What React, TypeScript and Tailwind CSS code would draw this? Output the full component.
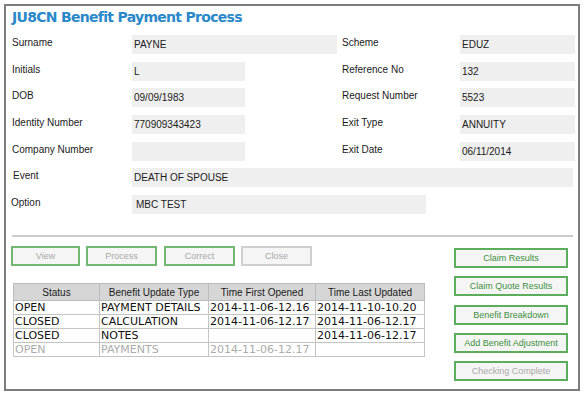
import React from "react";

type Pair = { label: string; value: string };

const leftFields: Pair[] = [
  { label: "Surname", value: "PAYNE" },
  { label: "Initials", value: "L" },
  { label: "DOB", value: "09/09/1983" },
  { label: "Identity Number", value: "770909343423" },
  { label: "Company Number", value: "" },
];

const rightFields: Pair[] = [
  { label: "Scheme", value: "EDUZ" },
  { label: "Reference No", value: "132" },
  { label: "Request Number", value: "5523" },
  { label: "Exit Type", value: "ANNUITY" },
  { label: "Exit Date", value: "06/11/2014" },
];

// gap above each row, so the rows land on the reference's uneven spacing
const rowGaps = ["mt-0", "mt-[8px]", "mt-[7px]", "mt-[8px]", "mt-[8px]"];

const updates = [
  { status: "OPEN", type: "PAYMENT DETAILS", first: "2014-11-06-12.16", last: "2014-11-10-10.20", off: false },
  { status: "CLOSED", type: "CALCULATION", first: "2014-11-06-12.17", last: "2014-11-06-12.17", off: false },
  { status: "CLOSED", type: "NOTES", first: "", last: "2014-11-06-12.17", off: false },
  { status: "OPEN", type: "PAYMENTS", first: "2014-11-06-12.17", last: "", off: true },
];

const sideButtons = [
  { text: "Claim Results", off: false },
  { text: "Claim Quote Results", off: false },
  { text: "Benefit Breakdown", off: false },
  { text: "Add Benefit Adjustment", off: false },
  { text: "Checking Complete", off: true },
];

function Label({ children, className = "" }: { children: React.ReactNode; className?: string }) {
  return <div className={`text-[10px] leading-[16px] text-[#1a1a1a] ${className}`}>{children}</div>;
}

function Value({ children, className = "" }: { children?: React.ReactNode; className?: string }) {
  return (
    <div className={`h-[19px] bg-[#efefef] pl-[2px] text-[10px] leading-[19px] text-[#1a1a1a] ${className}`}>
      {children}
    </div>
  );
}

function ActionButton({ text, green, className = "" }: { text: string; green: boolean; className?: string }) {
  return (
    <button
      className={`h-[20px] border-2 bg-[#f5f5f5] text-[9px] leading-[16px] text-[#a8a8a8] ${
        green ? "border-[#72b872]" : "border-[#cfcfcf]"
      } ${className}`}
    >
      {text}
    </button>
  );
}

export default function App() {
  return (
    <div className="w-[586px] h-[393px] bg-white font-['Liberation_Sans',Arial,sans-serif] overflow-hidden">
      <div className="ml-[4px] mt-[4px] w-[576px] h-[387px] border-2 border-[#7d7d7d] flex flex-col">
        <div className="h-[29px] pl-[6px] pt-[3px]">
          <h1 className="font-['DejaVu_Sans',Verdana,sans-serif] font-bold text-[14px] leading-[16px] tracking-[-0.7px] text-[#2a88c9]">
            JU8CN Benefit Payment Process
          </h1>
        </div>

        {leftFields.map((f, i) => (
          <div key={f.label} className={`flex h-[19px] ${rowGaps[i]}`}>
            <div className="flex w-[336px]">
              <Label className="w-[126px] pl-[6px]">{f.label}</Label>
              <Value className={i === 0 ? "w-[205px]" : "w-[113px]"}>{f.value}</Value>
            </div>
            <Label className="w-[118px]">{rightFields[i].label}</Label>
            <Value className="w-[115px]">{rightFields[i].value}</Value>
          </div>
        ))}

        <div className="flex h-[19px] mt-[7px]">
          <Label className="w-[126px] pl-[7px]">Event</Label>
          <Value className="w-[441px]">DEATH OF SPOUSE</Value>
        </div>

        <div className="flex h-[19px] mt-[8px]">
          <Label className="w-[126px] pl-[5px]">Option</Label>
          <Value className="w-[294px] pl-[4px]">MBC TEST</Value>
        </div>

        <div className="ml-[6px] mt-[21px] h-[2px] w-[561px] bg-[#cbcbcb]" />

        <div className="flex">
          <div className="w-[448px] pl-[5px]">
            <div className="mt-[9px] flex">
              <ActionButton text="View" green className="w-[69px]" />
              <ActionButton text="Process" green className="ml-[6px] w-[71px]" />
              <ActionButton text="Correct" green className="ml-[7px] w-[71px]" />
              <ActionButton text="Close" green={false} className="ml-[6px] w-[71px]" />
            </div>

            <table className="ml-[2px] mt-[17px] w-[411px] table-fixed border-collapse">
              <colgroup>
                <col className="w-[86px]" />
                <col className="w-[109px]" />
                <col className="w-[107px]" />
                <col className="w-[109px]" />
              </colgroup>
              <thead>
                <tr className="h-[17px] bg-[#d6d6d6]">
                  {["Status", "Benefit Update Type", "Time First Opened", "Time Last Updated"].map((h) => (
                    <th
                      key={h}
                      className="border border-[#bcbcbc] p-0 text-center text-[10px] font-normal leading-[15px] text-[#1a1a1a]"
                    >
                      {h}
                    </th>
                  ))}
                </tr>
              </thead>
              <tbody className="font-['DejaVu_Sans',Verdana,sans-serif] text-[11px]">
                {updates.map((r, i) => (
                  <tr key={i} className={`h-[14px] ${r.off ? "text-[#ababab]" : "text-[#111]"}`}>
                    {[r.status, r.type, r.first, r.last].map((c, j) => (
                      <td
                        key={j}
                        className="overflow-hidden whitespace-nowrap border border-[#c4c4c4] p-0 pl-[1px] leading-[13px]"
                      >
                        {c}
                      </td>
                    ))}
                  </tr>
                ))}
              </tbody>
            </table>
          </div>

          <div className="mt-[11px] flex w-[114px] flex-col gap-[8.25px]">
            {sideButtons.map((b) => (
              <button
                key={b.text}
                className={`h-[20px] border-2 border-[#5cae5c] bg-[#f5f5f5] text-[9px] leading-[16px] ${
                  b.off ? "text-[#a8a8a8]" : "text-[#3d8f3d]"
                }`}
              >
                {b.text}
              </button>
            ))}
          </div>
        </div>
      </div>
    </div>
  );
}
